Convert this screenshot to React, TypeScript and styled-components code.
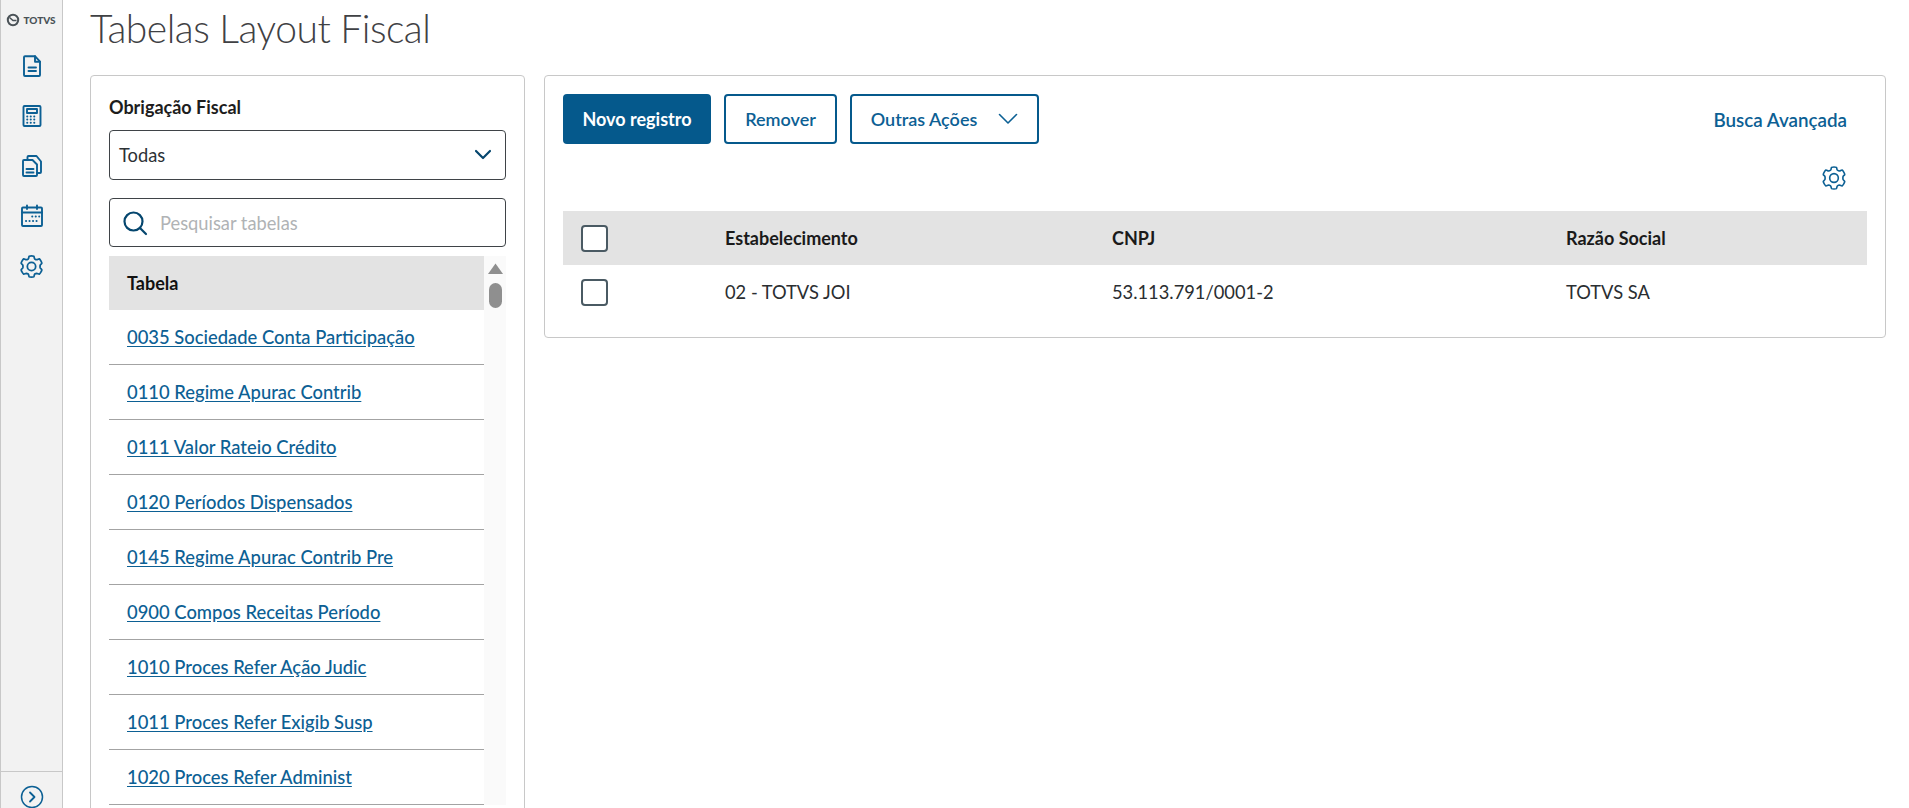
import React from "react";
import styled, { createGlobalStyle } from "styled-components";

const FONT = `Lato, "Noto Sans", sans-serif`;

const Global = createGlobalStyle`
  html, body { margin: 0; padding: 0; height: 100%; background: #fff; overflow: hidden; }
  body { font-family: ${FONT}; color: #1d1d1d; }
  * { box-sizing: border-box; }
`;

const Shell = styled.div`
  display: flex;
  width: 1909px;
  height: 808px;
  overflow: hidden;
`;

const Sidebar = styled.nav`
  width: 63px;
  flex: none;
  display: flex;
  flex-direction: column;
  background: #f2f2f2;
  border-left: 1px solid #c8c8c8;
  border-right: 1px solid #c8c8c8;
`;

const Logo = styled.div`
  height: 39px;
  display: flex;
  align-items: center;
  justify-content: center;
  gap: 3px;
  color: #4a5257;
  font-size: 10px;
  font-weight: 900;
  padding-right: 1px;
`;

const NavList = styled.div`
  flex: 1;
  display: flex;
  flex-direction: column;
  align-items: center;
  gap: 26px;
  padding-top: 15px;
`;

const NavIcon = styled.svg`
  width: 24px;
  height: 24px;
  flex: none;
  fill: none;
  stroke: #0c6094;
  stroke-width: 1.9;
  stroke-linejoin: round;
  stroke-linecap: round;
`;

const SidebarFoot = styled.div`
  height: 37px;
  flex: none;
  border-top: 1px solid #c8c8c8;
  display: flex;
  justify-content: center;
  padding-top: 13px;
`;

const Main = styled.main`
  flex: 1;
  min-width: 0;
  display: flex;
  flex-direction: column;
  padding: 0 23px 0 27px;
`;

const Title = styled.h1`
  margin: 0;
  flex: none;
  height: 75px;
  padding-top: 4px;
  font-size: 39px;
  line-height: 48px;
  font-weight: 300;
  letter-spacing: -0.5px;
  color: #3f4144;
`;

const Columns = styled.div`
  display: flex;
  flex: none;
  gap: 19px;
  align-items: flex-start;
`;

const Card = styled.section`
  background: #fff;
  border: 1px solid #c8c8c8;
  border-radius: 4px;
`;

const LeftCard = styled(Card)`
  width: 435px;
  flex: none;
  height: 760px;
  padding: 19px 18px 0;
  overflow: hidden;
`;

const FieldLabel = styled.div`
  font-size: 18px;
  font-weight: 700;
  line-height: 24px;
  height: 35px;
  color: #1d1d1d;
`;

const SelectBox = styled.div`
  height: 50px;
  border: 1px solid #3f4347;
  border-radius: 4px;
  display: flex;
  align-items: center;
  justify-content: space-between;
  padding: 0 12px 0 9px;
  font-size: 18.3px;
  color: #2c3135;
`;

const SearchBox = styled.div`
  height: 49px;
  margin-top: 18px;
  border: 1px solid #3f4347;
  border-radius: 4px;
  display: flex;
  align-items: center;
  gap: 12px;
  padding: 0 12px;
  font-size: 18.3px;
  color: #b0b3b5;
`;

const ListArea = styled.div`
  margin-top: 9px;
  display: flex;
`;

const ListTable = styled.div`
  width: 375px;
  flex: none;
`;

const ListHead = styled.div`
  height: 54px;
  background: #e3e3e3;
  display: flex;
  align-items: center;
  padding-left: 18px;
  font-size: 18px;
  font-weight: 700;
  color: #111;
`;

const ListRow = styled.div`
  height: 55px;
  border-bottom: 1px solid #a3a3a3;
  display: flex;
  align-items: center;
  padding: 0 0 1px 18px;
`;

const TableLink = styled.a`
  font-size: 18.4px;
  font-weight: 500;
  color: #0c6094;
  text-decoration: underline;
  text-underline-offset: 2px;
`;

const Scrollbar = styled.div`
  width: 22px;
  flex: none;
  background: #fafafa;
  display: flex;
  flex-direction: column;
  align-items: center;
  padding-top: 7px;
  gap: 9px;
`;

const ScrollUp = styled.svg`
  width: 15px;
  height: 11px;
  fill: #8f8f8f;
`;

const ScrollThumb = styled.div`
  width: 13px;
  height: 25px;
  background: #8f8f8f;
  border-radius: 7px;
`;

const RightCard = styled(Card)`
  flex: 1;
  min-width: 0;
  height: 263px;
  padding: 18px 18px 0;
`;

const Toolbar = styled.div`
  display: flex;
  align-items: center;
  gap: 13px;
  height: 50px;
`;

const PrimaryButton = styled.button`
  height: 50px;
  width: 148px;
  background: #05598c;
  border: none;
  border-radius: 4px;
  color: #fff;
  font: 700 18px ${FONT};
`;

const OutlineButton = styled.button<{ $w: number; $gap?: number }>`
  height: 50px;
  width: ${(p) => p.$w}px;
  background: #fff;
  border: 2px solid #05598c;
  border-radius: 4px;
  color: #0c6094;
  font: 600 18px ${FONT};
  display: flex;
  align-items: center;
  justify-content: center;
  gap: ${(p) => p.$gap ?? 0}px;
  padding: 0;
`;

const AdvancedLink = styled.a`
  margin-left: auto;
  margin-right: 20px;
  font-size: 18.8px;
  font-weight: 600;
  color: #0c6094;
`;

const GearRow = styled.div`
  display: flex;
  justify-content: flex-end;
  height: 67px;
  padding: 21px 20px 0 0;
`;

const Grid = styled.div`
  display: grid;
  grid-template-columns: 162px 387px 454px 1fr;
  align-items: center;
`;

const HeadRow = styled(Grid)`
  height: 54px;
  background: #e3e3e3;
  font-size: 18px;
  font-weight: 700;
  color: #1a1a1a;
`;

const BodyRow = styled(Grid)`
  height: 54px;
  font-size: 18.3px;
  color: #2a2e31;
`;

const CheckCell = styled.div`
  padding-left: 18px;
  display: flex;
`;

const Check = styled.span`
  width: 27px;
  height: 27px;
  background: #fff;
  border: 2px solid #4a5a63;
  border-radius: 4px;
`;

const Chevron = () => (
  <svg width="20" height="12" viewBox="0 0 20 12" fill="none" stroke="#05466e" strokeWidth="2.2" strokeLinecap="round" strokeLinejoin="round">
    <path d="M3 2l7 7 7-7" />
  </svg>
);

const ThinChevron = () => (
  <svg width="20" height="12" viewBox="0 0 20 12" fill="none" stroke="#0c6094" strokeWidth="1.6" strokeLinecap="round" strokeLinejoin="round">
    <path d="M1.5 1.5L10 10l8.5-8.5" />
  </svg>
);

const SearchIcon = () => (
  <svg width="26" height="26" viewBox="0 0 26 26" fill="none" stroke="#05466e" strokeWidth="2.2" strokeLinecap="round">
    <circle cx="11.5" cy="11.5" r="9" />
    <path d="M18 18L24 24" />
  </svg>
);

const gearPath =
  "M9.8 2.2c.6-.4 3.800-.4 4.400 0 .5.400.3 1.800.9 2.500.5.300 1.300.7 1.900.8.900 0 1.800-1 2.500-.8.700.3 2.500 3.400 2.400 4.100-.1.600-1.300 1.100-1.600 2-.1.600-.1 1.800 0 2.400.3.900 1.500 1.400 1.600 2 .1.700-1.700 3.800-2.400 4.100-.7.200-1.600-.8-2.500-.8-.6.100-1.400.5-1.900.8-.6.700-.4 2.100-.9 2.500-.6.400-3.800.4-4.400 0-.5-.4-.3-1.800-.9-2.500-.5-.3-1.300-.7-1.900-.8-.9 0-1.800 1-2.500.8-.7-.3-2.500-3.400-2.400-4.100.1-.6 1.300-1.100 1.600-2 .1-.6.1-1.800 0-2.400-.3-.9-1.500-1.400-1.600-2-.1-.7 1.700-3.800 2.400-4.100.7-.2 1.600.8 2.500.8.6-.1 1.400-.5 1.900-.8.6-.7.400-2.100.9-2.500z";

const Gear = ({ size = 24, width = 1.6 }: { size?: number; width?: number }) => (
  <svg width={size} height={size} viewBox="0 0 24 24" fill="none" stroke="#0c6094" strokeWidth={width} strokeLinejoin="round">
    <path d={gearPath} />
    <circle cx="12" cy="12" r="4" />
  </svg>
);

const rows = [
  "0035 Sociedade Conta Participação",
  "0110 Regime Apurac Contrib",
  "0111 Valor Rateio Crédito",
  "0120 Períodos Dispensados",
  "0145 Regime Apurac Contrib Pre",
  "0900 Compos Receitas Período",
  "1010 Proces Refer Ação Judic",
  "1011 Proces Refer Exigib Susp",
  "1020 Proces Refer Administ",
];

export default function App() {
  return (
    <Shell>
      <Global />
      <Sidebar>
        <Logo>
          <svg width="14" height="14" viewBox="0 0 14 14" fill="none" stroke="#4a5257" strokeWidth="2">
            <circle cx="7" cy="7" r="5.2" />
            <path d="M3.5 4.5L7 7.5h3.5" strokeWidth="1.5" />
          </svg>
          TOTVS
        </Logo>
        <NavList>
          <NavIcon viewBox="0 0 24 24">
            <path d="M4 3.2a1 1 0 0 1 1-1h10l5 5.500V21a1 1 0 0 1-1 1H5a1 1 0 0 1-1-1z" />
            <path d="M15 2.200v5.500h5M8.500 13.500h7.500M8.500 17h7.500" />
          </NavIcon>
          <NavIcon viewBox="0 0 24 24">
            <rect x="3.5" y="2" width="17" height="20" rx="1" />
            <rect x="7" y="5" width="10" height="4" />
            <path strokeWidth="2" strokeDasharray="0.1 3.4" d="M7.2 12.5h10M7.2 15.5h10M7.2 18.800h10" />
          </NavIcon>
          <NavIcon viewBox="0 0 24 24">
            <path d="M3 7a1 1 0 0 1 1-1h8.500l4.500 4.500V21a1 1 0 0 1-1 1H4a1 1 0 0 1-1-1z" />
            <path d="M6.500 15h7M6.500 18.500h7" />
            <path d="M7.500 6V3a1 1 0 0 1 1-1h8l4.500 5.500V18a1 1 0 0 1-1 1H17" />
          </NavIcon>
          <NavIcon viewBox="0 0 24 24">
            <rect x="2" y="3.500" width="20" height="18.500" rx="1" />
            <path d="M2 8.500h20M7 1.500v3.500M17 1.500v3.500" />
            <path strokeWidth="2" strokeDasharray="0.1 3.400" d="M12.200 12.500h7M6 17h14" />
          </NavIcon>
          <Gear size={25} width={1.7} />
        </NavList>
        <SidebarFoot>
          <svg width="24" height="24" viewBox="0 0 24 24" fill="none" stroke="#0c6094" strokeWidth="1.5" strokeLinecap="round" strokeLinejoin="round">
            <circle cx="12" cy="12" r="10.500" />
            <path d="M10 7.500l4.500 4.500-4.500 4.500" strokeWidth="1.800" />
          </svg>
        </SidebarFoot>
      </Sidebar>
      <Main>
        <Title>Tabelas Layout Fiscal</Title>
        <Columns>
          <LeftCard>
            <FieldLabel>Obrigação Fiscal</FieldLabel>
            <SelectBox>
              Todas
              <Chevron />
            </SelectBox>
            <SearchBox>
              <SearchIcon />
              Pesquisar tabelas
            </SearchBox>
            <ListArea>
              <ListTable>
                <ListHead>Tabela</ListHead>
                {rows.map((r) => (
                  <ListRow key={r}>
                    <TableLink>{r}</TableLink>
                  </ListRow>
                ))}
              </ListTable>
              <Scrollbar>
                <ScrollUp viewBox="0 0 15 11">
                  <path d="M7.500 0.500L15 11H0z" />
                </ScrollUp>
                <ScrollThumb />
              </Scrollbar>
            </ListArea>
          </LeftCard>
          <RightCard>
            <Toolbar>
              <PrimaryButton>Novo registro</PrimaryButton>
              <OutlineButton $w={113}>Remover</OutlineButton>
              <OutlineButton $w={189} $gap={21}>
                Outras Ações
                <ThinChevron />
              </OutlineButton>
              <AdvancedLink>Busca Avançada</AdvancedLink>
            </Toolbar>
            <GearRow>
              <Gear size={26} width={1.5} />
            </GearRow>
            <HeadRow>
              <CheckCell>
                <Check />
              </CheckCell>
              <div>Estabelecimento</div>
              <div>CNPJ</div>
              <div>Razão Social</div>
            </HeadRow>
            <BodyRow>
              <CheckCell>
                <Check />
              </CheckCell>
              <div>02 - TOTVS JOI</div>
              <div>53.113.791/0001-2</div>
              <div>TOTVS SA</div>
            </BodyRow>
          </RightCard>
        </Columns>
      </Main>
    </Shell>
  );
}
